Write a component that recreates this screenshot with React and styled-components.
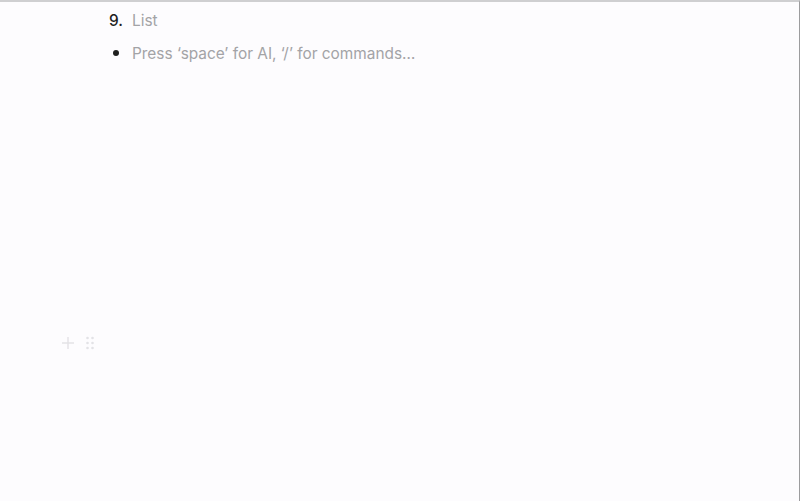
import styled, { createGlobalStyle } from "styled-components";

const GlobalStyle = createGlobalStyle`
  html, body {
    margin: 0;
    padding: 0;
    background: #fdfcfe;
  }
  #root {
    height: 100vh;
  }
`;

function App() {
  return (
    <>
      <GlobalStyle />
      <Frame>
        <Editor>
          <Block>
            <Marker>9.</Marker>
            <Placeholder>List</Placeholder>
          </Block>
          <Block>
            <Marker>
              <Dot />
            </Marker>
            <Placeholder>Press ‘space’ for AI, ‘/’ for commands…</Placeholder>
          </Block>
        </Editor>
        <Handle>
          <svg width="14" height="14" viewBox="0 0 14 14">
            <path d="M7 1v12M1 7h12" stroke="#e3e2e6" strokeWidth="1.4" />
          </svg>
          <svg width="10" height="14" viewBox="0 0 10 14">
            {[2, 7, 12].map((y) =>
              [2.5, 7.5].map((x) => <circle key={`${x}-${y}`} cx={x} cy={y} r="1.3" fill="#e3e2e6" />)
            )}
          </svg>
        </Handle>
      </Frame>
    </>
  );
}

const Frame = styled.div`
  position: relative;
  box-sizing: border-box;
  height: 100%;
  border-top: 2px solid #cfcfd1;
  border-right: 1px solid #9c9c9e;
  font-family: Inter, "Noto Sans", sans-serif;
  overflow: hidden;
`;

const Editor = styled.div`
  display: flex;
  flex-direction: column;
  gap: 7px;
  padding: 5px 0 0 103px;
`;

const Block = styled.div`
  display: flex;
  align-items: center;
  height: 26px;
  font-size: 15.4px;
`;

const Marker = styled.span`
  display: flex;
  align-items: center;
  justify-content: center;
  width: 26px;
  margin-right: 3px;
  color: #1f1f1f;
  font-weight: 500;
`;

const Dot = styled.span`
  width: 6px;
  height: 6px;
  border-radius: 50%;
  background: #1f1f1f;
`;

const Placeholder = styled.span`
  color: #a3a3a6;
`;

const Handle = styled.div`
  position: absolute;
  top: 334px;
  left: 61px;
  display: flex;
  align-items: center;
  gap: 10px;
`;

export default App;
